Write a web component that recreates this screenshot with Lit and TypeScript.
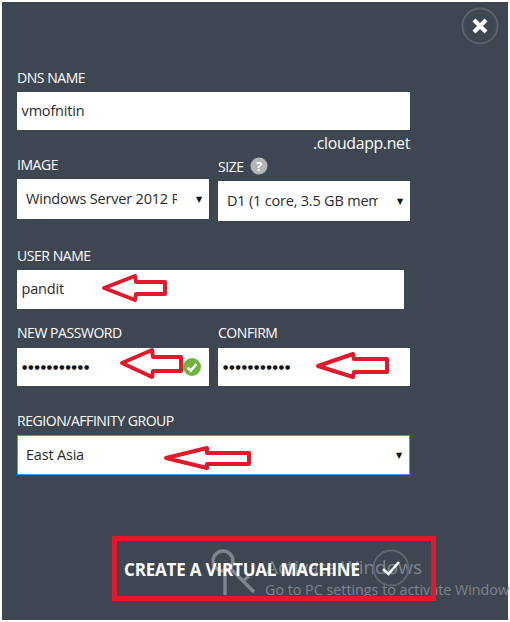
import { LitElement, html, css, svg } from "lit";
import { customElement } from "lit/decorators.js";

const RED = "#e3182a";
const arrows = [
  "104,288 135,276 136,282 165,282 165,294 136,294 135,300",
  "122,363 152,350 153,357 181,357 181,371 153,371 152,377",
  "318,366 353,354 354,359 387,359 387,372 354,372 353,377",
  "166,458 207,448 207,453 249,453 249,464 207,464 207,468",
];

@customElement("app-root")
export class AppRoot extends LitElement {
  static styles = css`
    :host { display: block; width: 510px; height: 622px; background: #fff; font-family: "Open Sans", "Noto Sans", sans-serif; position: relative; overflow: hidden; }
    .panel { box-sizing: border-box; margin: 2px; width: 506px; height: 618px; background: #3e4651; color: #fff; padding: 66px 0 0 15px; display: flex; flex-direction: column; }
    .form { width: 393px; display: flex; flex-direction: column; }
    .label { height: 20px; line-height: 20px; font-size: 14px; letter-spacing: -0.45px; color: #fff; margin-bottom: 4px; display: flex; align-items: center; gap: 6px; white-space: nowrap; }
    .control { box-sizing: border-box; background: #fff; color: #2b2b2b; font-size: 14.5px; letter-spacing: -0.2px; display: flex; align-items: center; white-space: nowrap; position: relative; padding-bottom: 2px; }
    .h38 { height: 38px; } .h39 { height: 39px; } .h40 { height: 40px; }
    .input { padding-left: 4.6px; }
    .select { padding-left: 9px; padding-bottom: 1px; }
    .select .clip { overflow: hidden; width: 151px; }
    .select .caret { position: absolute; right: 7px; top: 50%; transform: translateY(-50%); font-size: 8px; color: #111; font-family: "DejaVu Sans", sans-serif; }
    .suffix { height: 20px; line-height: 20px; margin-top: 3px; margin-bottom: 2px; text-align: right; font-size: 15.8px; letter-spacing: -0.3px; }
    .two { display: grid; grid-template-columns: 192px 192px; column-gap: 9px; }
    .shift { margin-top: 2px; }
    .user { width: 387px; margin-top: 25px; }
    .pw { margin-top: 14px; }
    .pw .label { margin-bottom: 5px; }
    .dots { font-family: "DejaVu Sans", sans-serif; font-size: 6px; letter-spacing: 0.95px; color: #111; padding-left: 0.5px; }
    .region { margin-top: 25px; }
    .focus { border: 1px solid #5b94d6; padding-left: 8px; padding-bottom: 2px; }
    .tick { position: absolute; right: 8px; top: 10px; }
    .help { margin-top: -3px; }
    .close { position: absolute; left: 460px; top: 6px; }
    .action { position: absolute; left: 124px; top: 558px; font-size: 17px; font-weight: 700; letter-spacing: -0.18px; line-height: 24px; white-space: nowrap; color: #fff; z-index: 3; }
    .action-check { position: absolute; left: 372px; top: 549px; z-index: 3; }
    .wm { position: absolute; color: #7f858e; white-space: nowrap; font-family: "Open Sans", sans-serif; z-index: 1; }
    .wm1 { left: 266px; top: 554px; font-size: 19px; line-height: 26px; }
    .wm2 { left: 265px; top: 580px; font-size: 14.3px; line-height: 20px; }
    .overlay { position: absolute; inset: 0; z-index: 4; pointer-events: none; }
    .key { position: absolute; left: 0; top: 0; z-index: 2; }
    .frame { position: absolute; box-sizing: border-box; left: 112px; top: 536px; width: 324px; height: 65px; border: 5px solid ${css([RED] as any)}; z-index: 4; }
  `;

  render() {
    return html`
      <div class="panel">
        <div class="form">
          <div class="label">DNS NAME</div>
          <div class="control input h38">vmofnitin</div>
          <div class="suffix">.cloudapp.net</div>
          <div class="two">
            <div>
              <div class="label">IMAGE</div>
              <div class="control select h40"><span class="clip">Windows Server 2012 R2</span><span class="caret">▼</span></div>
            </div>
            <div class="shift">
              <div class="label">SIZE
                <svg class="help" width="18" height="18" viewBox="0 0 18 18"><circle cx="9" cy="9" r="8.5" fill="#b3b6ba"/><text x="9" y="13.5" text-anchor="middle" font-size="13" font-weight="700" fill="#fff" font-family="Open Sans, sans-serif">?</text></svg>
              </div>
              <div class="control select h40"><span class="clip">D1 (1 core, 3.5 GB memory)</span><span class="caret">▼</span></div>
            </div>
          </div>
          <div class="user">
            <div class="label">USER NAME</div>
            <div class="control input h39">pandit</div>
          </div>
          <div class="two pw">
            <div>
              <div class="label">NEW PASSWORD</div>
              <div class="control input h38"><span class="dots">●●●●●●●●●●●</span>
                <svg class="tick" width="18" height="18" viewBox="0 0 18 18"><circle cx="9" cy="9" r="9" fill="#6fb43f"/><path d="M4.5 9.5 L7.8 12.6 L13.5 6" fill="none" stroke="#fff" stroke-width="2.6"/></svg>
              </div>
            </div>
            <div>
              <div class="label">CONFIRM</div>
              <div class="control input h38"><span class="dots">●●●●●●●●●●●</span></div>
            </div>
          </div>
          <div class="region">
            <div class="label">REGION/AFFINITY GROUP</div>
            <div class="control select h40 focus"><span>East Asia</span><span class="caret">▼</span></div>
          </div>
        </div>
      </div>

      <svg class="close" width="40" height="40" viewBox="0 0 40 40">
        <circle cx="20" cy="20" r="17.5" fill="none" stroke="#5c636d" stroke-width="2"/>
        <path d="M14 14 L26 26 M26 14 L14 26" stroke="#fff" stroke-width="4.2" fill="none"/>
      </svg>

      <svg class="key" width="510" height="622" viewBox="0 0 510 622">
        <g fill="none" stroke="#7f858e" stroke-width="3.4">
          <circle cx="223" cy="561" r="10"/>
          <path d="M225 566 V595 M230 568 L254 592 M243 581 L249 576"/>
        </g>
      </svg>
      <div class="wm wm1">Activate Windows</div>
      <div class="wm wm2">Go to PC settings to activate Windows.</div>
      <div class="action">CREATE A VIRTUAL MACHINE</div>
      <svg class="action-check" width="38" height="38" viewBox="0 0 38 38">
        <circle cx="19" cy="19" r="17.5" fill="none" stroke="#5f6670" stroke-width="2"/>
        <path d="M11 20 L16.5 25 L27 13" fill="none" stroke="#fff" stroke-width="2.6"/>
      </svg>
      <div class="frame"></div>
      <svg class="overlay" width="510" height="622" viewBox="0 0 510 622">
        ${arrows.map((p) => svg`<polygon points=${p} fill="none" stroke=${RED} stroke-width="4" stroke-linejoin="round"/>`)}
      </svg>
    `;
  }
}
